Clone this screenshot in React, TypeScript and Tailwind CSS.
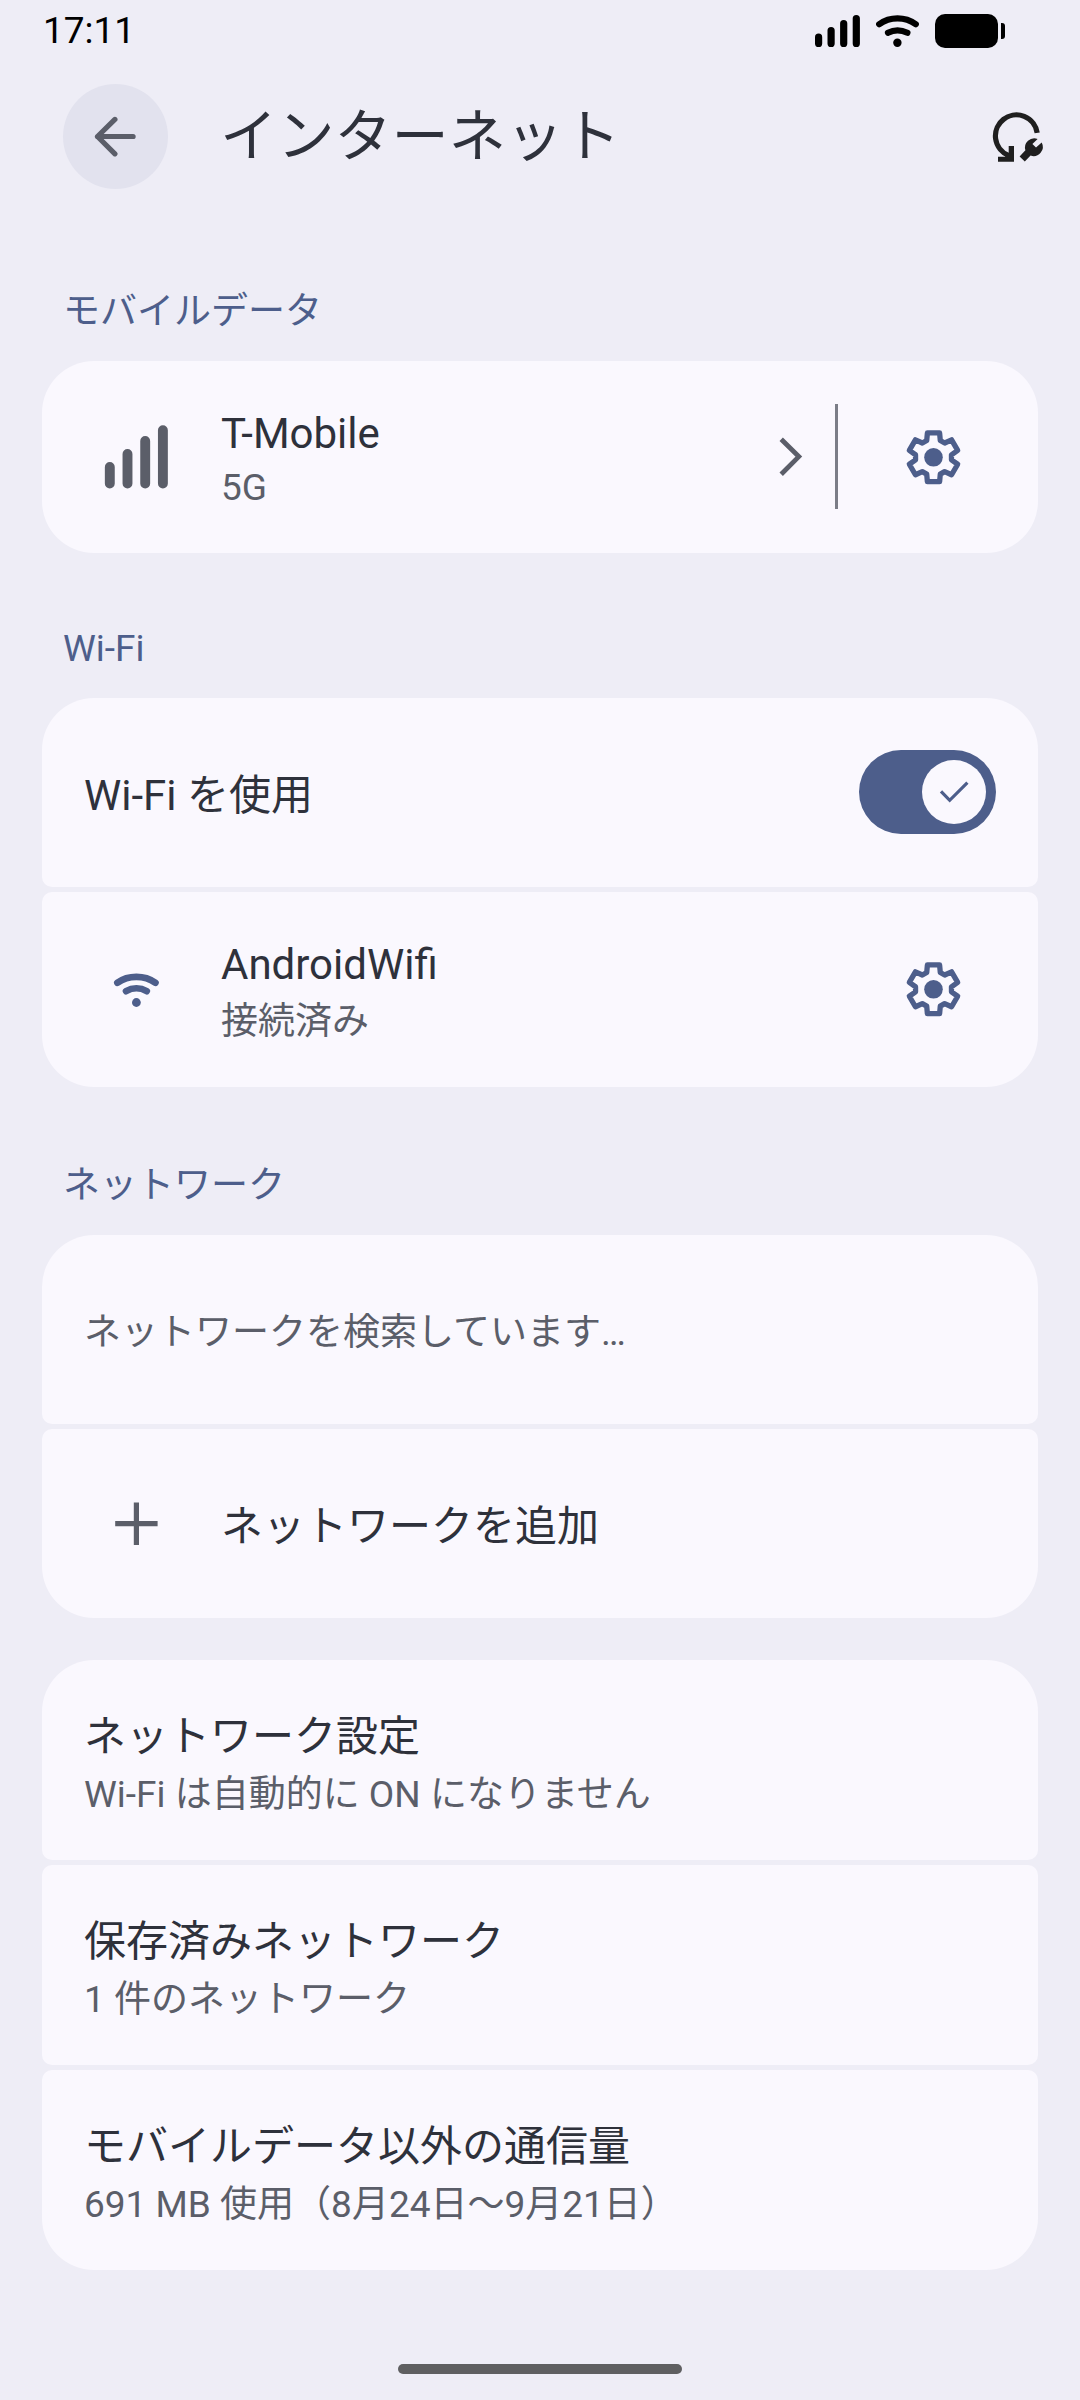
import type { ReactNode } from "react";

const FONT = "font-['Roboto','Noto_Sans_CJK_JP',sans-serif]";

/* Settings gear: six teeth generated by rotating one tooth profile. */
const TOOTH = [
  [-6.1, -24.4],
  [6.1, -24.4],
  [6.8, -16.8],
  [11.2, -14.3],
];
const GEAR_POINTS = [0, 1, 2, 3, 4, 5]
  .flatMap((i) => {
    const a = (i * Math.PI) / 3;
    return TOOTH.map(
      ([x, y]) =>
        `${(x * Math.cos(a) - y * Math.sin(a)).toFixed(2)},${(x * Math.sin(a) + y * Math.cos(a)).toFixed(2)}`,
    );
  })
  .join(" ");

function Gear() {
  return (
    <svg className="h-[64px] w-[64px]" viewBox="-32.5 -32.3 64 64" fill="none">
      <polygon points={GEAR_POINTS} stroke="#4d5e8b" strokeWidth="5.3" strokeLinejoin="round" />
      <circle r="9.3" fill="#4d5e8b" />
    </svg>
  );
}

function WifiGlyph({ className }: { className: string }) {
  return (
    <svg className={className} viewBox="-0.4 0.3 46 36" fill="none" stroke="currentColor" strokeWidth="6.8" strokeLinecap="round">
      <path d="M4 11C15 3.2 31 3.2 42 11" />
      <path d="M12.7 19.4C19 15.8 27 15.8 33.3 19.4" />
      <circle cx="23" cy="30.8" r="4.4" fill="currentColor" stroke="none" />
    </svg>
  );
}

function StatusBar() {
  return (
    <div className="flex h-[60px] items-start justify-between pl-[43px] pr-[75px] text-black">
      <span className="text-[37px] leading-[61px]">17:11</span>
      <div className="flex pt-[14px]">
        <svg className="h-[34px] w-[46px]" viewBox="815 14 46 34" stroke="currentColor" strokeWidth="7.2" strokeLinecap="round">
          <path d="M818.6 37.2V43.4M831.1 30.6V43.4M843.7 23.6V43.4M856.3 18.6V43.4" />
        </svg>
        <svg className="ml-[14px] h-[34px] w-[45px]" viewBox="875 14 45 34" fill="none" stroke="currentColor" strokeWidth="6.2" strokeLinecap="round">
          <path d="M879.2 24.2C890 16.4 905 16.4 915.8 24.2" />
          <path d="M888 32.8C894 29.6 901 29.6 907.4 32.8" />
          <circle cx="897.4" cy="42.8" r="4.2" fill="currentColor" stroke="none" />
        </svg>
        <svg className="ml-[15px] h-[34px] w-[70px]" viewBox="935 14 70 34" fill="currentColor">
          <rect x="935" y="14" width="63" height="34" rx="10" />
          <path d="M1001 23h1a3 3 0 0 1 3 3v10a3 3 0 0 1-3 3h-1z" />
        </svg>
      </div>
    </div>
  );
}

function ResetIcon() {
  return (
    <svg className="h-[57px] w-[56px]" viewBox="990 108 56 57" fill="none">
      <path d="M1037.2 132.8A21 21 0 1 0 1008.4 155.3L1012 158" stroke="#1f1f1f" strokeWidth="5.2" />
      <path d="M998 161.8V156.7H1004.9L1008.7 153V146H1014V161.8Z" fill="#1f1f1f" />
      <path
        d="M1019.6 156.4L1025.4 150.2A9.3 9.3 0 0 1 1037.6 138.9L1032.4 144L1036 147.5L1041.7 142.4A9.3 9.3 0 0 1 1030.6 155.6L1024.8 161.6Z"
        fill="#1f1f1f"
      />
    </svg>
  );
}

function AppBar() {
  return (
    <div className="mt-[24px] flex h-[105px] items-center pl-[63px] pr-[34px]">
      <button className="flex h-[105px] w-[105px] items-center justify-center rounded-full bg-[#e2e2ee]">
        <svg className="h-[44px] w-[44px]" viewBox="-21.5 -22 44 44" fill="none" stroke="#5b5e69" strokeWidth="5.2" strokeLinecap="round" strokeLinejoin="round">
          <path d="M17.6 -0.5H-18M-0.6 -17.6L-18 -0.5L-0.6 16.8" />
        </svg>
      </button>
      <h1 className="ml-[52px] flex-1 text-[57.2px] leading-[105px]">インターネット</h1>
      <ResetIcon />
    </div>
  );
}

function Heading({ className, children }: { className: string; children: ReactNode }) {
  return <h2 className={`pl-[63px] text-[37px] leading-[51px] text-[#4d5e8b] ${className}`}>{children}</h2>;
}

function Card({ className, children }: { className: string; children: ReactNode }) {
  return <div className={`mx-[42px] flex bg-[#faf8fe] ${className}`}>{children}</div>;
}

function IconSlot({ children }: { children: ReactNode }) {
  return <div className="flex w-[188px] shrink-0 items-center justify-center">{children}</div>;
}

function Title({ children }: { children: ReactNode }) {
  return <div className="text-[42px] leading-[57px]">{children}</div>;
}

function Summary({ className = "", children }: { className?: string; children: ReactNode }) {
  return <div className={`text-[37px] leading-[51px] text-[#5b5e69] ${className}`}>{children}</div>;
}

const SETTINGS = [
  { title: "ネットワーク設定", summary: "Wi-Fi は自動的に ON になりません", shape: "rounded-t-[52px] rounded-b-[10px]" },
  { title: "保存済みネットワーク", summary: "1 件のネットワーク", shape: "mt-[5px] rounded-[10px]" },
  { title: "モバイルデータ以外の通信量", summary: "691 MB 使用（8月24日～9月21日）", shape: "mt-[5px] rounded-t-[10px] rounded-b-[52px]" },
];

export default function App() {
  return (
    <div lang="ja" className={`flex h-[2400px] w-[1080px] flex-col overflow-hidden bg-[#eeedf6] text-[#2e313b] ${FONT}`}>
      <StatusBar />
      <AppBar />

      <Heading className="mt-[97px]">モバイルデータ</Heading>
      <Card className="mt-[24px] h-[192px] rounded-[52px]">
        <IconSlot>
          <svg className="h-[64px] w-[64px]" viewBox="104.2 424.5 64 64" stroke="#5b5e69" strokeWidth="9.9" strokeLinecap="round">
            <path d="M110 466.4V483M127.7 453.4V483M145.4 440.4V483M163.1 429.7V483" />
          </svg>
        </IconSlot>
        <div className="ml-[-9px] flex-1 pt-[44px]">
          <Title>T-Mobile</Title>
          <Summary>5G</Summary>
        </div>
        <div className="flex items-center">
          <svg className="h-[40px] w-[24px]" viewBox="0 0 24 40" fill="none" stroke="#5b5e69" strokeWidth="4.8">
            <path d="M2.2 2.2L19.8 19.6L2.2 37.2" />
          </svg>
          <div className="mb-px ml-[32px] h-[105px] w-[3px] bg-[#7b7d87]" />
        </div>
        <div className="flex w-[200px] items-center pl-[63px]">
          <Gear />
        </div>
      </Card>

      <Heading className="mt-[70px]">Wi-Fi</Heading>
      <Card className="mt-[24px] h-[189px] justify-between rounded-t-[52px] rounded-b-[10px] pl-[42px] pr-[42px]">
        <div className="pt-[69px]">
          <Title>Wi-Fi を使用</Title>
        </div>
        <div className="mt-[52px] flex h-[84px] w-[137px] items-center justify-end rounded-full bg-[#4d5e8b] pr-[10px]">
          <div className="flex h-[64px] w-[64px] items-center justify-center rounded-full bg-[#faf8fe]">
            <svg className="h-[24px] w-[30px]" viewBox="-15 -12 30 24" fill="none" stroke="#4d5e8b" strokeWidth="3.2">
              <path d="M-13 -0.7L-4.3 8.3L13.4 -9.3" />
            </svg>
          </div>
        </div>
      </Card>
      <Card className="mt-[5px] h-[195px] rounded-t-[10px] rounded-b-[52px]">
        <IconSlot>
          <WifiGlyph className="h-[36px] w-[46px] text-[#4d5e8b]" />
        </IconSlot>
        <div className="ml-[-9px] flex-1 pt-[44px]">
          <Title>AndroidWifi</Title>
          <Summary className="mt-[3px]">接続済み</Summary>
        </div>
        <div className="flex w-[200px] items-center pb-px pl-[63px]">
          <Gear />
        </div>
      </Card>

      <Heading className="mt-[73px]">ネットワーク</Heading>
      <Card className="mt-[24px] h-[189px] rounded-t-[52px] rounded-b-[10px] pl-[42px] pt-[72px]">
        <Summary>ネットワークを検索しています…</Summary>
      </Card>
      <Card className="mt-[5px] h-[189px] rounded-t-[10px] rounded-b-[52px]">
        <IconSlot>
          <svg className="h-[44px] w-[44px]" viewBox="-0.4 0.3 44 44" stroke="#5b5e69" strokeWidth="5.2">
            <path d="M22 0.8V43.2M0.8 22H43.2" />
          </svg>
        </IconSlot>
        <div className="ml-[-9px] pt-[69px]">
          <Title>ネットワークを追加</Title>
        </div>
      </Card>

      <div className="mt-[42px]">
        {SETTINGS.map((s) => (
          <Card key={s.title} className={`h-[200px] pl-[42px] pt-[48px] ${s.shape}`}>
            <div>
              <Title>{s.title}</Title>
              <Summary className="mt-[4px]">{s.summary}</Summary>
            </div>
          </Card>
        ))}
      </div>

      <div className="mx-auto mt-[94px] h-[10px] w-[284px] rounded-full bg-[#5f5f61]" />
    </div>
  );
}
